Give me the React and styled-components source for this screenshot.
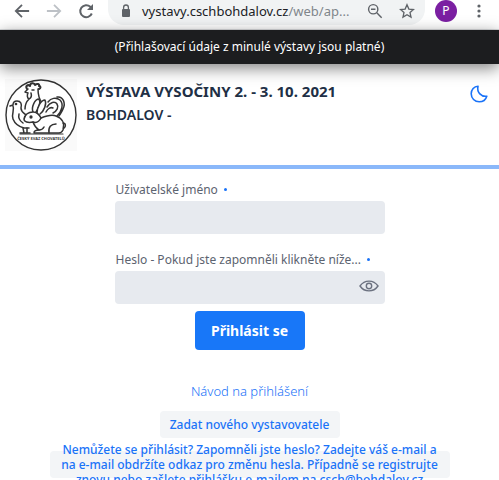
import styled, { createGlobalStyle } from "styled-components"
import React from "react"

const GlobalStyle = createGlobalStyle`
  * {
    box-sizing: border-box;
  }

  body {
    margin: 0;
    height: 100vh;
    overflow: hidden;
    background-color: white;
    font-family: "Noto Sans", "Open Sans", sans-serif;
    font-size: 12px;
  }

  button, input {
    font-family: inherit;
    border: none;
    padding: 0;
  }
`

const BrowserBar = styled.div`
  display: flex;
  align-items: flex-start;
  height: 30px;
  border-bottom: 1px solid #dcdee0;
  padding: 0 10px 0 12px;
`

const BarButton = styled.button`
  display: flex;
  flex: none;
  align-items: center;
  justify-content: center;
  width: 20px;
  height: 22px;
  margin-right: ${props => props.$gap || 0}px;
  background: none;
  color: ${props => props.$color || "#5f6368"};
  cursor: pointer;
`

const AddressBar = styled.div`
  display: flex;
  flex: 1;
  min-width: 0;
  height: 25px;
  padding: 0 8px 3px 12px;
  margin-right: 10px;
  align-items: center;
  background-color: #f1f3f4;
  border-radius: 0 0 16px 16px;
`

const Address = styled.div`
  flex: 1;
  min-width: 0;
  margin-left: 10px;
  color: #202124;
  font-size: 13px;
  line-height: 20px;
  white-space: nowrap;

  span {
    color: #80868b;
  }
`

const Avatar = styled.button`
  flex: none;
  width: 22px;
  height: 22px;
  margin-right: 12px;
  border-radius: 50%;
  background-color: #7b1fa2;
  color: white;
  font-size: 12px;
  line-height: 22px;
`

const Notice = styled.div`
  position: relative;
  height: 34px;
  line-height: 34px;
  text-align: center;
  background-color: #1c1d1f;
  color: white;
  box-shadow: 0 4px 16px rgba(0, 0, 0, 0.5);
`

const Header = styled.header`
  display: flex;
  align-items: flex-start;
  height: 105px;
  padding: 15px 10px 0 5px;
  border-bottom: 4px solid #8ab8fa;
`

const Title = styled.h1`
  flex: 1;
  margin: 0 0 0 9px;
  color: #212f45;
  font-size: 15px;
  font-weight: 700;
  line-height: 24px;
`

const Subtitle = styled.span`
  display: block;
  font-size: 14px;
  font-weight: 600;
`

const ThemeButton = styled(BarButton)`
  margin-top: 4px;
`

const Form = styled.form`
  display: flex;
  flex-direction: column;
  align-items: center;
  padding-top: 12px;
`

const Field = styled.div`
  width: 270px;
  margin-bottom: ${props => props.$gap}px;
`

const Label = styled.label`
  display: block;
  height: 20px;
  padding-left: 1px;
  line-height: 17px;
  color: #5c6370;
  white-space: nowrap;

  &::after {
    content: "";
    display: inline-block;
    width: 3px;
    height: 3px;
    margin: 0 0 3px 6px;
    border-radius: 50%;
    background-color: #1a73f8;
  }
`

const InputWrapper = styled.div`
  position: relative;
  height: 33px;
`

const Input = styled.input`
  width: 100%;
  height: 100%;
  padding: 0 10px;
  border-radius: 4px;
  background-color: #e7eaef;
`

const EyeButton = styled(BarButton)`
  position: absolute;
  top: 4px;
  right: 6px;
  color: #6c7280;
`

const Submit = styled.button`
  width: 110px;
  height: 39px;
  border-radius: 4px;
  background-color: #1877f8;
  color: white;
  font-size: 14px;
  font-weight: 700;
`

const Links = styled.nav`
  display: flex;
  flex-direction: column;
  align-items: center;
  padding-top: 32px;
`

const GuideLink = styled.a`
  margin-bottom: 11px;
  color: #1a73f8;
  font-size: 13px;
  font-weight: 300;
  line-height: 18px;
  text-decoration: none;
`

// fixed height, longer texts run over the edges
const LinkButton = styled.button`
  display: flex;
  align-items: center;
  justify-content: center;
  width: ${props => props.$width}px;
  height: 27px;
  padding: 0 10px;
  margin-bottom: 13px;
  border-radius: 4px;
  background-color: #f3f5f7;
  color: #1a73f8;
  font-size: 12px;
  font-weight: 500;
  line-height: 15px;
`

function Logo() {
  return <svg width="72" height="72" viewBox="0 0 72 72" fill="none" stroke="#333" strokeWidth="1.5" strokeLinecap="round" strokeLinejoin="round" role="img" aria-label="Český svaz chovatelů">
    <rect width="72" height="72" fill="#fafafa" stroke="none"/>
    <circle cx="36" cy="36" r="35" fill="white" strokeWidth="1.4"/>
    {/* rooster */}
    <path d="M22 10c-2-3 1-5 3-3c0-3 4-4 5-1c2-2 5-1 4 1c2 0 2 2 0 3" strokeWidth="2"/>
    <path d="M23 10l-3 3l3 1c-1 2-1 5 1 6c2-1 3-3 2-6M24 20c-3 3-4 6-4 10M33 10c0 6 1 10 4 14M27 11h2"/>
    {/* tail feathers */}
    <path d="M43 23c3-4 8-5 12-2c4 4 2 11-3 16M42 28c3-5 8-6 10-3c2 3 0 7-4 9M52 18c6-1 9 6 6 12c-1 3-3 5-4 7M41 33c2-4 5-5 7-4"/>
    {/* dove */}
    <path d="M5 27l3-1c0-3 2-4 4-4c4 0 5 3 4 7c0 4 3 5 5 7M8 27c2 4-2 8 0 13c2 5 7 8 11 9h5"/>
    <circle cx="11" cy="25" r="0.6" fill="#333"/>
    <path d="M18 49l1 5M22 49v5M15 54h10M14 35c-1 4 1 7 4 9"/>
    {/* rabbit */}
    <path d="M28 33c-2-5 2-13 6-13c2 3 0 9-3 13" fill="white"/>
    <path d="M32 34c0-6 4-13 8-13c2 4-1 11-5 14" fill="white"/>
    <path d="M36 39c5-2 10-4 15-2c6 2 9 7 7 14c-1 2-2 3-4 3H29c0-2 2-3 5-3c-3-2-5-5-6-8c-5 1-9 0-9-3c1-4 4-7 9-7c4 0 6 2 8 6z" fill="white"/>
    <path d="M28 43c3 1 6 0 8-4M39 48c-1 2-3 3-5 3M44 54c-1-6 2-9 7-9M58 44c3 0 3 4 1 5"/>
    <circle cx="26" cy="38" r="0.9" fill="#333"/>
    <path d="M15 55h43" strokeWidth="1.2"/>
    <text x="36" y="61" textAnchor="middle" fill="#333" stroke="none" fontSize="4" fontWeight="700">ČESKÝ SVAZ CHOVATELŮ</text>
  </svg>
}

function LineIcon({ size = 18, width = 2, children }) {
  return <svg width={size} height={size} viewBox="0 0 18 18" fill="none" stroke="currentColor" strokeWidth={width}>
    {children}
  </svg>
}

export default function LoginScreen() {
  const [showPassword, setShowPassword] = React.useState(false)

  return <>
    <GlobalStyle/>
    <BrowserBar>
      <BarButton aria-label="Zpět" $gap={12}>
        <LineIcon size={16}><path d="M17 9H3M9 2L2 9l7 7"/></LineIcon>
      </BarButton>
      <BarButton aria-label="Vpřed" $gap={12} $color="#bdc1c6">
        <LineIcon size={16}><path d="M1 9h14M9 2l7 7l-7 7"/></LineIcon>
      </BarButton>
      <BarButton aria-label="Obnovit" $gap={12}>
        <LineIcon>
          <path d="M14.800 11.500A6 6 0 1 1 13.300 4.700L14.500 6"/>
          <path d="M16 2v6h-6z" fill="currentColor" stroke="none"/>
        </LineIcon>
      </BarButton>
      <AddressBar>
        <svg width="12" height="14" viewBox="0 0 12 14" fill="#5f6368">
          <rect x="2" y="5" width="8" height="8" rx="1"/>
          <path d="M3.6 6V3.4a2.4 2.4 0 0 1 4.8 0V6" fill="none" stroke="#5f6368" strokeWidth="1.3"/>
        </svg>
        <Address>vystavy.cschbohdalov.cz<span>/web/ap...</span></Address>
        <BarButton aria-label="Lupa" $gap={12}>
          <LineIcon size={16} width={1.6}><circle cx="7" cy="7" r="5.2"/><path d="M11 11l5.5 5.5M4.5 7h5"/></LineIcon>
        </BarButton>
        <BarButton aria-label="Záložka">
          <LineIcon size={16} width={1.5}><path d="M9 2l2.1 4.8l5.2.5l-3.9 3.5l1.1 5.1L9 13.2l-4.5 2.7l1.1-5.1L1.7 7.3l5.2-.5z"/></LineIcon>
        </BarButton>
      </AddressBar>
      <Avatar aria-label="Profil">P</Avatar>
      <BarButton aria-label="Nabídka">
        <svg width="4" height="14" viewBox="0 0 4 14" fill="#5f6368">
          <circle cx="2" cy="2" r="1.6"/><circle cx="2" cy="7" r="1.6"/><circle cx="2" cy="12" r="1.6"/>
        </svg>
      </BarButton>
    </BrowserBar>
    <Notice>(Přihlašovací údaje z minulé výstavy jsou platné)</Notice>
    <Header>
      <Logo/>
      <Title>
        VÝSTAVA VYSOČINY 2. - 3. 10. 2021
        <Subtitle>BOHDALOV -</Subtitle>
      </Title>
      <ThemeButton aria-label="Tmavý režim" $color="#1a73f8">
        <LineIcon width={1.6}><path d="M8 1.2C4 1.2 1.2 4.7 1.2 8.8a8 8 0 0 0 8 8c3.6 0 6.6-2.3 7.6-5.6C11.6 12 6.5 7.5 8 1.2z" strokeLinejoin="round"/></LineIcon>
      </ThemeButton>
    </Header>
    <Form onSubmit={(event) => event.preventDefault()}>
      <Field $gap={17}>
        <Label htmlFor="username">Uživatelské jméno</Label>
        <InputWrapper>
          <Input id="username" type="text"/>
        </InputWrapper>
      </Field>
      <Field $gap={7}>
        <Label htmlFor="password">Heslo - Pokud jste zapomněli klikněte níže...</Label>
        <InputWrapper>
          <Input id="password" type={showPassword ? "text" : "password"}/>
          <EyeButton type="button" aria-label="Zobrazit heslo" onClick={() => setShowPassword(!showPassword)}>
            <svg width="20" height="14" viewBox="0 0 20 14" fill="none" stroke="currentColor" strokeWidth="1.4">
              <path d="M1 7c4.5-6.5 13.5-6.5 18 0c-4.5 6.5-13.5 6.5-18 0z"/>
              <circle cx="10" cy="7" r="2.7"/>
            </svg>
          </EyeButton>
        </InputWrapper>
      </Field>
      <Submit type="submit">Přihlásit se</Submit>
    </Form>
    <Links>
      <GuideLink href="#navod">Návod na přihlášení</GuideLink>
      <LinkButton $width={180}>Zadat nového vystavovatele</LinkButton>
      <LinkButton $width={400}>
        Nemůžete se přihlásit? Zapomněli jste heslo? Zadejte váš e-mail a na e-mail obdržíte odkaz pro změnu hesla. Případně se registrujte znovu nebo zašlete přihlášku e-mailem na csch@bohdalov.cz
      </LinkButton>
    </Links>
  </>
}
